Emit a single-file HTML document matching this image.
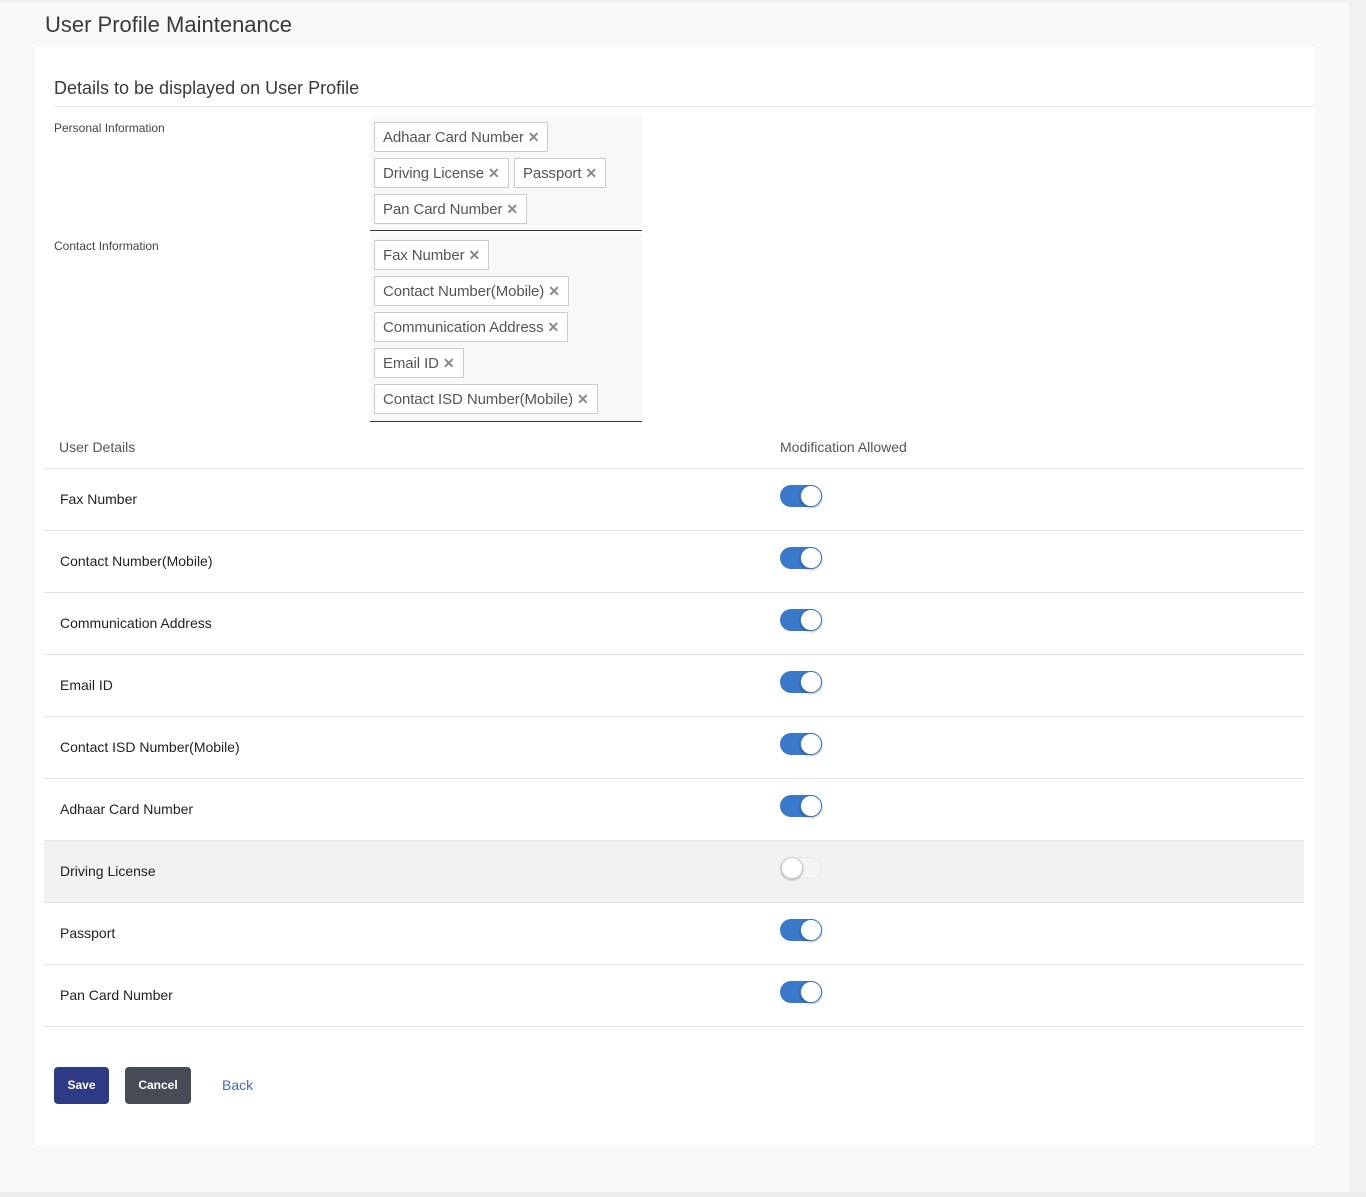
<!DOCTYPE html>
<html><head><meta charset="utf-8"><style>
*{box-sizing:border-box;margin:0;padding:0}
body{width:1366px;height:1197px;background:#f8f8f8;font-family:"Liberation Sans",sans-serif;position:relative;overflow:hidden;color:#333}
.abs{position:absolute}
.strip{left:1349px;top:0;width:17px;height:1197px;background:#f0f0f0}
.bot{left:0;top:1192px;width:1366px;height:5px;background:#ececec}
.top{left:0;top:0;width:1349px;height:2px;background:#f0f0f0}
.panel{left:35px;top:47px;width:1280px;height:1098px;background:#fff}
.chipbox{background:#f8f8f8;border-bottom:1px solid #333}
.chip{position:absolute;height:30px;border:1px solid #ccc;background:#fff;font-size:15px;line-height:29px;padding:0 8px;color:#555;white-space:nowrap;letter-spacing:-0.1px}
.chip b{font-weight:bold;color:#888;margin-left:4px;font-size:14px}
.lbl{font-size:12px;color:#444}
.row{position:absolute;left:44px;width:1260px;height:62px;border-bottom:1px solid #e3e3e3}
.row span{position:absolute;left:16px;top:22px;font-size:14px;color:#222}
.tg{position:absolute;left:736px;top:16px;width:42px;height:22px;border-radius:11px;background:#3a78c9}
.tg i{position:absolute;right:0;top:0;width:22px;height:22px;border-radius:50%;background:#fff;border:1px solid #3a78c9;box-shadow:0 1px 2px rgba(0,0,0,.3)}
.tg.off{background:#f4f4f4;border:1px solid #e8e8e8}
.tg.off i{left:0;right:auto;border-color:#ccc;top:-1px}
.btn{position:absolute;top:1067px;height:37px;border-radius:4px;color:#fff;font-size:12px;font-weight:bold;text-align:center;line-height:37px}
</style></head><body>
<div class="abs top"></div>
<div class="abs strip"></div>
<div class="abs bot"></div>
<div class="abs" style="left:45px;top:12px;font-size:22px;color:#3a3a3a">User Profile Maintenance</div>
<div class="abs panel"></div>
<div class="abs" style="left:54px;top:78px;font-size:18px;color:#3a3a3a">Details to be displayed on User Profile</div>
<div class="abs" style="left:54px;top:106px;width:1261px;height:1px;background:#e8e8e8"></div>
<div class="abs lbl" style="left:54px;top:121px">Personal Information</div>
<div class="abs lbl" style="left:54px;top:239px">Contact Information</div>
<div class="abs chipbox" style="left:370px;top:117px;width:272px;height:114px"></div>
<div class="abs chipbox" style="left:370px;top:233px;width:272px;height:189px"></div>
<div class="chip" style="left:374px;top:122px">Adhaar Card Number<b>✕</b></div>
<div class="chip" style="left:374px;top:158px">Driving License<b>✕</b></div>
<div class="chip" style="left:514px;top:158px">Passport<b>✕</b></div>
<div class="chip" style="left:374px;top:194px">Pan Card Number<b>✕</b></div>
<div class="chip" style="left:374px;top:240px">Fax Number<b>✕</b></div>
<div class="chip" style="left:374px;top:276px">Contact Number(Mobile)<b>✕</b></div>
<div class="chip" style="left:374px;top:312px">Communication Address<b>✕</b></div>
<div class="chip" style="left:374px;top:348px">Email ID<b>✕</b></div>
<div class="chip" style="left:374px;top:384px">Contact ISD Number(Mobile)<b>✕</b></div>
<div class="abs" style="left:59px;top:439px;font-size:14px;color:#555">User Details</div>
<div class="abs" style="left:780px;top:439px;font-size:14px;color:#555">Modification Allowed</div>
<div class="abs" style="left:44px;top:468px;width:1260px;height:1px;background:#e3e3e3"></div>
<div class="row" style="top:469px"><span>Fax Number</span><div class="tg"><i></i></div></div>
<div class="row" style="top:531px"><span>Contact Number(Mobile)</span><div class="tg"><i></i></div></div>
<div class="row" style="top:593px"><span>Communication Address</span><div class="tg"><i></i></div></div>
<div class="row" style="top:655px"><span>Email ID</span><div class="tg"><i></i></div></div>
<div class="row" style="top:717px"><span>Contact ISD Number(Mobile)</span><div class="tg"><i></i></div></div>
<div class="row" style="top:779px"><span>Adhaar Card Number</span><div class="tg"><i></i></div></div>
<div class="row" style="top:841px;background:#f2f2f2"><span>Driving License</span><div class="tg off"><i></i></div></div>
<div class="row" style="top:903px"><span>Passport</span><div class="tg"><i></i></div></div>
<div class="row" style="top:965px"><span>Pan Card Number</span><div class="tg"><i></i></div></div>
<div class="btn" style="left:54px;width:55px;background:#2d3a84">Save</div>
<div class="btn" style="left:125px;width:66px;background:#474b55">Cancel</div>
<div class="abs" style="left:222px;top:1077px;font-size:14px;color:#4a68b0">Back</div>
</body></html>
